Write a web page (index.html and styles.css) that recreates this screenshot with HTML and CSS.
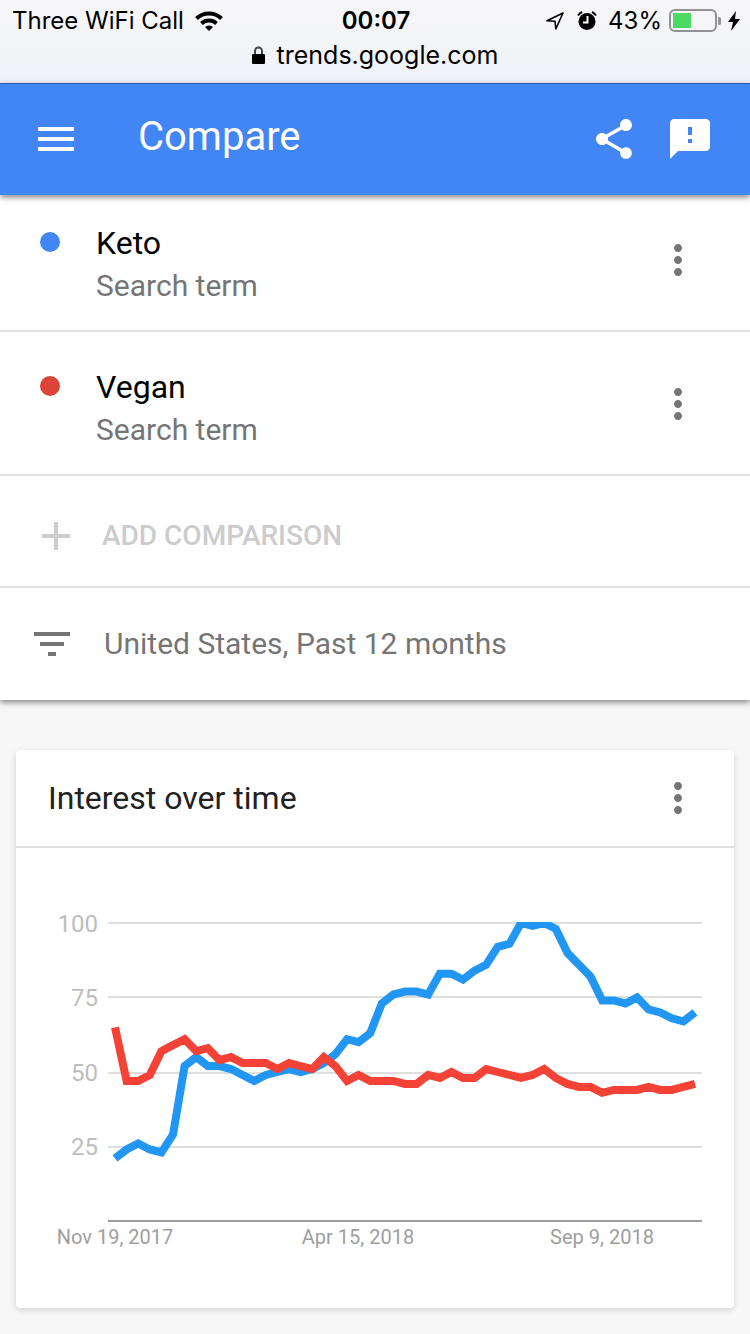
FILE: index.html
```html
<!DOCTYPE html>
<html lang="en">
<head>
  <meta charset="UTF-8">
  <meta name="viewport" content="width=device-width, initial-scale=1.0">
  <title>Compare - Google Trends</title>
  <link rel="stylesheet" href="styles.css">
</head>
<body>
  <!-- Browser bar -->
  <div class="browser-bar">
    <div class="status">
      <div class="status-left">
        <span>Three WiFi Call</span>
        <svg width="28" height="20" viewBox="0 0 28 20" fill="none" stroke="#000" stroke-width="4">
          <path d="M1.5 7.5a18 18 0 0 1 25 0"/>
          <path d="M6.5 12.5a11 11 0 0 1 15 0"/>
          <path d="M14 20l-4-4a6 6 0 0 1 8 0z" fill="#000" stroke="none"/>
        </svg>
      </div>
      <span class="time">00:07</span>
      <div class="status-right">
        <svg class="location" width="18" height="18" viewBox="0 0 18 18" fill="none" stroke="#000" stroke-width="1.6" stroke-linejoin="round">
          <path d="M17 1L1 8.800l8 .4.8 7.800z"/>
        </svg>
        <svg class="alarm" width="20" height="20" viewBox="0 0 20 20">
          <circle cx="10" cy="10.500" r="8.500"/>
          <path d="M1 4.500A11 11 0 0 1 5 1M19 4.500A11 11 0 0 0 15 1" fill="none" stroke="#000" stroke-width="2"/>
          <path d="M10.500 5v6.500H6" fill="none" stroke="#fff" stroke-width="2"/>
        </svg>
        <span>43%</span>
        <svg width="52" height="24" viewBox="0 0 52 24">
          <rect x="1" y="1" width="46" height="21" rx="5" fill="none" stroke="#929295" stroke-width="2"/>
          <path d="M49 8a4 4 0 0 1 0 8z" fill="#929295"/>
          <rect x="4" y="4" width="18" height="15" fill="#4cd964"/>
        </svg>
        <svg width="12" height="20" viewBox="0 0 12 20"><path d="M8 0L0 11h5L3 20l9-12H7z"/></svg>
      </div>
    </div>
    <div class="address">
      <svg width="13" height="18" viewBox="0 0 13 18">
        <path d="M3 9V5a3.500 3.500 0 0 1 7 0v4" fill="none" stroke="#444" stroke-width="2"/>
        <rect y="8" width="13" height="10" rx="1"/>
      </svg>
      <span>trends.google.com</span>
    </div>
  </div>

  <!-- Header -->
  <header>
    <button class="icon-btn" aria-label="Menu">
      <svg width="48" height="48" viewBox="0 0 24 24"><path d="M3 18h18v-2H3v2zm0-5h18v-2H3v2zm0-7v2h18V6H3z"/></svg>
    </button>
    <h1>Compare</h1>
    <button class="icon-btn" aria-label="Share">
      <svg width="48" height="48" viewBox="0 0 24 24"><path d="M18 16.080c-.76 0-1.440.3-1.960.77L8.910 12.700c.05-.23.09-.46.09-.7s-.04-.47-.09-.7l7.050-4.110c.54.5 1.250.81 2.040.81 1.660 0 3-1.340 3-3s-1.340-3-3-3-3 1.340-3 3c0 .24.04.47.09.7L8.040 9.810C7.500 9.310 6.790 9 6 9c-1.660 0-3 1.340-3 3s1.340 3 3 3c.79 0 1.500-.31 2.040-.81l7.120 4.160c-.05.21-.08.43-.08.65 0 1.610 1.310 2.920 2.920 2.920s2.920-1.310 2.920-2.920-1.310-2.920-2.920-2.920z"/></svg>
    </button>
    <button class="icon-btn" aria-label="Send feedback">
      <svg width="48" height="48" viewBox="0 0 24 24"><path d="M20 2H4c-1.100 0-2 .9-2 2v18l4-4h14c1.100 0 2-.9 2-2V4c0-1.100-.9-2-2-2zm-7 12h-2v-2h2v2zm0-4h-2V6h2v4z"/></svg>
    </button>
  </header>

  <!-- Search terms and filters -->
  <section class="terms">
    <div class="term">
      <span class="dot blue"></span>
      <div class="term-text">
        <h2>Keto</h2>
        <p>Search term</p>
      </div>
      <button class="more-btn" aria-label="More options for Keto">
        <svg width="48" height="48" viewBox="0 0 24 24"><path d="M12 8c1.100 0 2-.9 2-2s-.9-2-2-2-2 .9-2 2 .9 2 2 2zm0 2c-1.100 0-2 .9-2 2s.9 2 2 2 2-.9 2-2-.9-2-2-2zm0 6c-1.100 0-2 .9-2 2s.9 2 2 2 2-.9 2-2-.9-2-2-2z"/></svg>
      </button>
    </div>
    <div class="term">
      <span class="dot red"></span>
      <div class="term-text">
        <h2>Vegan</h2>
        <p>Search term</p>
      </div>
      <button class="more-btn" aria-label="More options for Vegan">
        <svg width="48" height="48" viewBox="0 0 24 24"><path d="M12 8c1.100 0 2-.9 2-2s-.9-2-2-2-2 .9-2 2 .9 2 2 2zm0 2c-1.100 0-2 .9-2 2s.9 2 2 2 2-.9 2-2-.9-2-2-2zm0 6c-1.100 0-2 .9-2 2s.9 2 2 2 2-.9 2-2-.9-2-2-2z"/></svg>
      </button>
    </div>
    <button class="add-btn">
      <svg width="48" height="48" viewBox="0 0 24 24"><path d="M19 13h-6v6h-2v-6H5v-2h6V5h2v6h6v2z"/></svg>
      <span>ADD COMPARISON</span>
    </button>
    <button class="filter-btn">
      <svg width="48" height="48" viewBox="0 0 24 24"><path d="M10 18h4v-2h-4v2zM3 6v2h18V6H3zm3 7h12v-2H6v2z"/></svg>
      <span>United States, Past 12 months</span>
    </button>
  </section>

  <!-- Chart card -->
  <main class="card">
    <div class="card-header">
      <h2>Interest over time</h2>
      <button class="more-btn" aria-label="More options for the chart">
        <svg width="48" height="48" viewBox="0 0 24 24"><path d="M12 8c1.100 0 2-.9 2-2s-.9-2-2-2-2 .9-2 2 .9 2 2 2zm0 2c-1.100 0-2 .9-2 2s.9 2 2 2 2-.9 2-2-.9-2-2-2zm0 6c-1.100 0-2 .9-2 2s.9 2 2 2 2-.9 2-2-.9-2-2-2z"/></svg>
      </button>
    </div>
    <svg class="chart" viewBox="0 0 718 460" role="img" aria-label="Interest over time for Keto and Vegan">
      <clipPath id="plot"><rect x="92" y="74" width="594" height="300"/></clipPath>
      <path class="grid" d="M92 75h594M92 149h594M92 225h594M92 299h594"/>
      <path class="axis" d="M92 373h594"/>
      <g class="y-labels">
        <text x="82" y="84">100</text>
        <text x="82" y="158">75</text>
        <text x="82" y="233">50</text>
        <text x="82" y="307">25</text>
      </g>
      <g class="x-labels">
        <text x="99" y="396">Nov 19, 2017</text>
        <text x="342" y="396">Apr 15, 2018</text>
        <text x="586" y="396">Sep 9, 2018</text>
      </g>
      <g clip-path="url(#plot)">
        <polyline class="line keto" id="keto"/>
        <polyline class="line vegan" id="vegan"/>
      </g>
    </svg>
  </main>

  <script>
    // Weekly values, Nov 2017 - Nov 2018
    const keto = [21, 24, 26, 24, 23, 29, 52, 55, 52, 52, 51, 49, 47, 49, 50, 51, 50,
      51, 53, 56, 61, 60, 63, 73, 76, 77, 77, 76, 83, 83, 81, 84, 86, 92, 93, 100, 99,
      100, 98, 90, 86, 82, 74, 74, 73, 75, 71, 70, 68, 67, 70];
    const vegan = [65, 47, 47, 49, 57, 59, 61, 57, 58, 54, 55, 53, 53, 53, 51, 53, 52,
      51, 55, 52, 47, 49, 47, 47, 47, 46, 46, 49, 48, 50, 48, 48, 51, 50, 49, 48, 49,
      51, 48, 46, 45, 45, 43, 44, 44, 44, 45, 44, 44, 45, 46];

    // Draw one line in the plot area
    function drawLine(id, values) {
      const step = 580 / (values.length - 1);
      const points = values.map((v, i) => `${99 + i * step},${373 - v * 2.98}`);
      document.getElementById(id).setAttribute("points", points.join(" "));
    }

    drawLine("keto", keto);
    drawLine("vegan", vegan);
  </script>
</body>
</html>
```
FILE: styles.css
```css
/* General Reset */
* {
  margin: 0;
  padding: 0;
  box-sizing: border-box;
}

body {
  background: #f7f7f7;
  font-family: Roboto, sans-serif;
}

svg {
  display: block;
  flex-shrink: 0;
}

button {
  background: none;
  border: none;
  font-family: inherit;
  cursor: pointer;
}

h1, h2 {
  font-weight: 400;
}

/* Browser bar */
.browser-bar {
  height: 84px;
  padding-top: 5px;
  background: linear-gradient(#f6f6f8, #f4f5f8 50%, #eef2f7);
  border-bottom: 1px solid #2f62b5;
  font-family: Inter, sans-serif;
  font-size: 24px;
  line-height: 32px;
  color: #000;
}

.status {
  display: grid;
  grid-template-columns: 1fr auto 1fr;
  align-items: center;
  padding: 0 10px 0 12px;
}

.status-left, .status-right {
  display: flex;
  align-items: center;
}

.status-left {
  gap: 11px;
}

.status-right {
  justify-content: flex-end;
  gap: 7px;
}

.location {
  margin-right: 6px;
}

.alarm {
  margin-right: 4px;
}

.time {
  font-weight: 600;
}

.address {
  display: flex;
  justify-content: center;
  align-items: center;
  gap: 12px;
  padding-top: 2px;
  font-size: 25px;
}

/* Header */
header {
  position: relative;
  display: flex;
  align-items: center;
  gap: 28px;
  height: 111px;
  padding: 0 36px 2px 32px;
  background: #4285f4;
  box-shadow: 0 2px 6px rgba(0, 0, 0, 0.5);
}

h1 {
  flex: 1;
  padding: 0 0 4px 30px;
  font-size: 40px;
  line-height: 48px;
  color: #fff;
}

.icon-btn svg {
  fill: #fff;
}

/* Search terms */
.terms {
  background: #fff;
  box-shadow: 0 2px 6px rgba(0, 0, 0, 0.5);
}

.term {
  display: flex;
  align-items: flex-start;
  padding: 35px 48px 21px 40px;
  border-bottom: 2px solid #e0e0e0;
}

.term:first-child {
  padding-top: 28px;
}

.dot {
  width: 20px;
  height: 20px;
  margin: 9px 36px 0 0;
  border-radius: 50%;
}

.blue { background: #4285f4; }
.red { background: #db4437; }

.term-text {
  flex: 1;
}

.term h2 {
  font-size: 32px;
  line-height: 40px;
  color: #000;
}

.term p {
  font-size: 30px;
  line-height: 46px;
  color: #757575;
}

.more-btn svg {
  fill: #757575;
}

.term .more-btn {
  margin-top: 13px;
}

.add-btn, .filter-btn {
  display: flex;
  align-items: center;
  width: 100%;
  height: 112px;
}

.add-btn span, .filter-btn span {
  padding-bottom: 2px;
}

.add-btn {
  padding: 10px 32px 0;
  gap: 22px;
  border-bottom: 2px solid #e0e0e0;
  font-size: 28px;
  font-weight: 500;
  color: #ccc;
}

.add-btn svg {
  fill: #ccc;
}

.filter-btn {
  padding: 0 28px;
  gap: 28px;
  font-size: 30px;
  color: #757575;
}

.filter-btn svg {
  fill: #757575;
}

/* Chart card */
.card {
  margin: 50px 16px 26px;
  background: #fff;
  border-radius: 4px;
  box-shadow: 0 2px 6px rgba(0, 0, 0, 0.15);
}

.card-header {
  display: flex;
  justify-content: space-between;
  align-items: center;
  height: 98px;
  padding: 0 32px;
  border-bottom: 2px solid #e0e0e0;
}

.card-header h2 {
  font-size: 32px;
  color: #212121;
}

.chart {
  width: 100%;
}

.grid, .axis {
  stroke: #dedede;
  stroke-width: 2;
}

.axis {
  stroke: #9e9e9e;
}

.y-labels {
  font-size: 24px;
  text-anchor: end;
  fill: #bdbdbd;
}

.x-labels {
  font-size: 20px;
  text-anchor: middle;
  fill: #9e9e9e;
}

.line {
  fill: none;
  stroke-width: 8;
}

.keto { stroke: #2196f3; }
.vegan { stroke: #f44336; }
```
